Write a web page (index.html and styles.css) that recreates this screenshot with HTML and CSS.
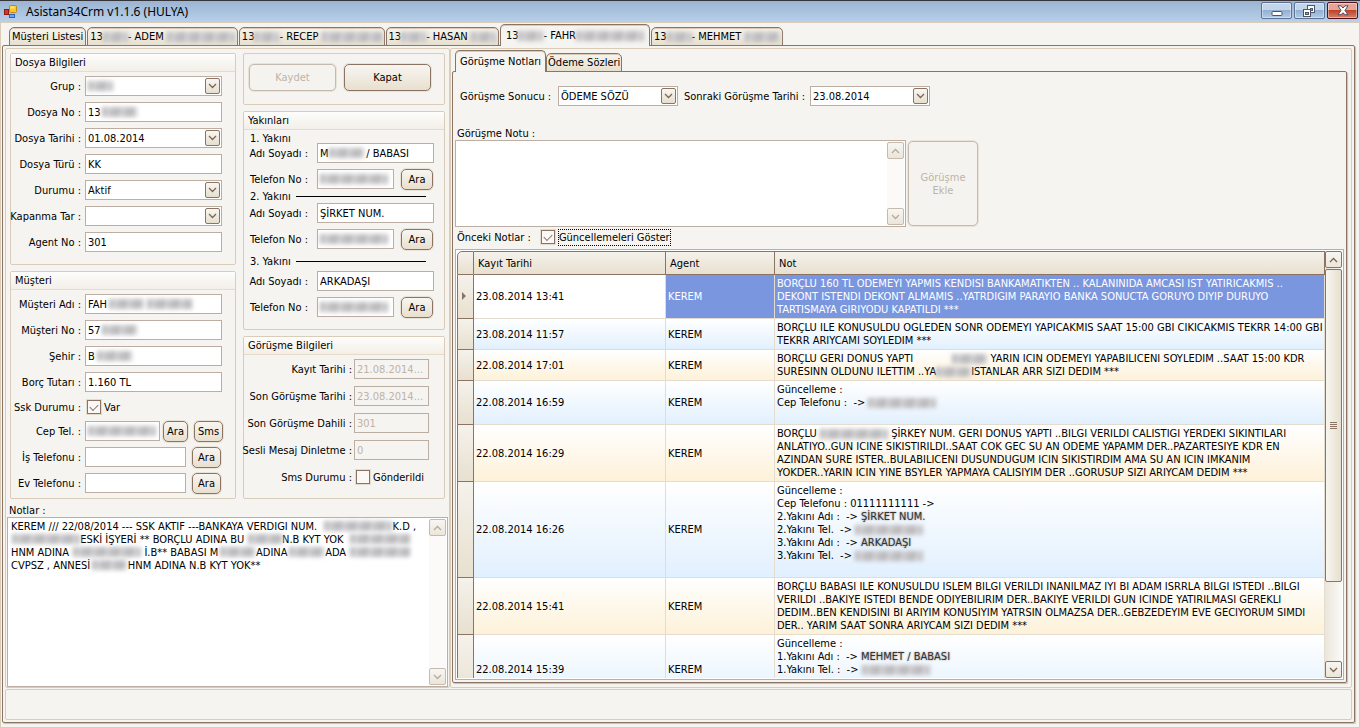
FILE: index.html
```html
<!DOCTYPE html>
<html lang="tr">
<head>
  <meta charset="UTF-8">
  <meta name="viewport" content="width=device-width, initial-scale=1.0">
  <title>Asistan34Crm v1.1.6 (HULYA)</title>
  <link rel="stylesheet" href="styles.css">
</head>
<body>
  <svg class="symbols" aria-hidden="true">
    <symbol id="down" viewBox="0 0 9 6"><path d="M1 1l3.500 3.500L8 1" fill="none" stroke="currentColor" stroke-width="1.300"/></symbol>
    <symbol id="up" viewBox="0 0 9 6"><path d="M1 5l3.500-3.500L8 5" fill="none" stroke="currentColor" stroke-width="1.300"/></symbol>
  </svg>

  <header class="titlebar">
    <svg class="app-icon" width="13" height="14" viewBox="0 0 13 14">
      <rect x="5.500" y="0.500" width="7" height="7" rx="1" fill="#fbc52d" stroke="#b78a1a"/>
      <rect x="6.500" y="1.500" width="4" height="2" fill="#fde68a"/>
      <rect x="0.500" y="4.500" width="4" height="5" fill="#d5381f" stroke="#8d1c10"/>
      <rect x="5.500" y="9.500" width="5" height="3" fill="#6ea6f5" stroke="#2f62b8"/>
    </svg>
    <h1>Asistan34Crm v1.1.6 (HULYA)</h1>
    <div class="window-buttons">
      <button type="button" aria-label="Simge durumuna küçült">
        <svg width="12" height="12" viewBox="0 0 12 12"><rect x="1" y="6.500" width="10" height="4" rx="1" fill="#fff" stroke="#4d5566"/></svg>
      </button>
      <button type="button" aria-label="Önceki boyut">
        <svg width="13" height="12" viewBox="0 0 13 12">
          <rect x="4.500" y="0.500" width="7" height="7" fill="#fff" stroke="#4d5566"/>
          <rect x="7.500" y="3.500" width="2" height="2" fill="#8ea9cb" stroke="#4d5566"/>
          <rect x="0.500" y="4.500" width="7" height="7" fill="#fff" stroke="#4d5566"/>
          <rect x="2.500" y="7.500" width="3" height="2" fill="#8ea9cb" stroke="#4d5566"/>
        </svg>
      </button>
      <button type="button" class="close" aria-label="Kapat">
        <svg width="12" height="11" viewBox="0 0 12 11"><path d="M1 .800h3l2 2.200L8 .800h3L8 5.500l3 4.200H8L6 7.800 4 9.700H1l3-4.200z" fill="#fff" stroke="#4d4a5c"/></svg>
      </button>
    </div>
  </header>

  <main class="window">
    <nav class="tabs">
      <button type="button">Müşteri Listesi</button>
      <button type="button">13<i class="smudge w25"></i>- ADEM <i class="smudge w70"></i></button>
      <button type="button">13<i class="smudge w25"></i>- RECEP <i class="smudge w60"></i></button>
      <button type="button">13<i class="smudge w25"></i>- HASAN <i class="smudge w25"></i></button>
      <button type="button" class="active">13<i class="smudge w25"></i>- FAHR<i class="smudge w70"></i></button>
      <button type="button">13<i class="smudge w25"></i>- MEHMET <i class="smudge w35"></i></button>
    </nav>

    <div class="page">
      <div class="columns">
        <section class="panel customer">
          <div class="groups">
            <div class="column">
              <fieldset class="group file-info">
                <h2>Dosya Bilgileri</h2>
                <div class="row">
                  <label for="grup">Grup :</label>
                  <div class="box"><select id="grup"><option></option></select><i class="smudge at-start w25"></i><span class="arrow"><svg><use href="#down"/></svg></span></div>
                </div>
                <div class="row">
                  <label for="dosyaNo">Dosya No :</label>
                  <div class="box"><input id="dosyaNo" value="13"><i class="smudge w35"></i></div>
                </div>
                <div class="row">
                  <label for="dosyaTarihi">Dosya Tarihi :</label>
                  <div class="box"><select id="dosyaTarihi"><option>01.08.2014</option></select><span class="arrow"><svg><use href="#down"/></svg></span></div>
                </div>
                <div class="row">
                  <label for="dosyaTuru">Dosya Türü :</label>
                  <div class="box"><input id="dosyaTuru" value="KK"></div>
                </div>
                <div class="row">
                  <label for="durumu">Durumu :</label>
                  <div class="box"><select id="durumu"><option>Aktif</option></select><span class="arrow"><svg><use href="#down"/></svg></span></div>
                </div>
                <div class="row">
                  <label for="kapanma">Kapanma Tar :</label>
                  <div class="box"><select id="kapanma"><option></option></select><span class="arrow"><svg><use href="#down"/></svg></span></div>
                </div>
                <div class="row">
                  <label for="agentNo">Agent No :</label>
                  <div class="box"><input id="agentNo" value="301"></div>
                </div>
              </fieldset>

              <fieldset class="group customer-info">
                <h2>Müşteri</h2>
                <div class="row">
                  <label for="musteriAdi">Müşteri Adı :</label>
                  <div class="box"><input id="musteriAdi" value="FAH"><i class="smudge after-word w35"></i><i class="smudge after-name w45"></i></div>
                </div>
                <div class="row">
                  <label for="musteriNo">Müşteri No :</label>
                  <div class="box"><input id="musteriNo" value="57"><i class="smudge w35"></i></div>
                </div>
                <div class="row">
                  <label for="sehir">Şehir :</label>
                  <div class="box"><input id="sehir" value="B"><i class="smudge after-letter w35"></i></div>
                </div>
                <div class="row">
                  <label for="borc">Borç Tutarı :</label>
                  <div class="box"><input id="borc" value="1.160 TL"></div>
                </div>
                <div class="row short">
                  <span class="caption">Ssk Durumu :</span>
                  <label class="check"><input type="checkbox" checked> Var</label>
                </div>
                <div class="row">
                  <label for="cepTel">Cep Tel. :</label>
                  <div class="box cell-phone"><input id="cepTel"><i class="smudge at-start w70"></i></div>
                  <button type="button" class="small narrow">Ara</button>
                  <button type="button" class="small">Sms</button>
                </div>
                <div class="row">
                  <label for="isTel">İş Telefonu :</label>
                  <div class="box phone"><input id="isTel"></div>
                  <button type="button" class="small">Ara</button>
                </div>
                <div class="row">
                  <label for="evTel">Ev Telefonu :</label>
                  <div class="box phone"><input id="evTel"></div>
                  <button type="button" class="small">Ara</button>
                </div>
              </fieldset>
            </div>

            <div class="column">
              <div class="group actions">
                <button type="button" disabled>Kaydet</button>
                <button type="button">Kapat</button>
              </div>

              <fieldset class="group relatives">
                <h2>Yakınları</h2>
                <h3>1. Yakını</h3>
                <div class="row">
                  <label for="yakin1">Adı Soyadı :</label>
                  <div class="box"><input id="yakin1" value="M            / BABASI"><i class="smudge after-letter w35"></i></div>
                </div>
                <div class="row">
                  <label for="yakinTel1">Telefon No :</label>
                  <div class="box"><input id="yakinTel1"><i class="smudge at-start w70"></i></div>
                  <button type="button" class="small">Ara</button>
                </div>
                <h3 class="ruled">2. Yakını</h3>
                <div class="row">
                  <label for="yakin2">Adı Soyadı :</label>
                  <div class="box"><input id="yakin2" value="ŞİRKET NUM."></div>
                </div>
                <div class="row">
                  <label for="yakinTel2">Telefon No :</label>
                  <div class="box"><input id="yakinTel2"><i class="smudge at-start w70"></i></div>
                  <button type="button" class="small">Ara</button>
                </div>
                <h3 class="ruled spaced">3. Yakını</h3>
                <div class="row">
                  <label for="yakin3">Adı Soyadı :</label>
                  <div class="box"><input id="yakin3" value="ARKADAŞI"></div>
                </div>
                <div class="row">
                  <label for="yakinTel3">Telefon No :</label>
                  <div class="box"><input id="yakinTel3"><i class="smudge at-start w70"></i></div>
                  <button type="button" class="small">Ara</button>
                </div>
              </fieldset>

              <fieldset class="group call-info">
                <h2>Görüşme Bilgileri</h2>
                <div class="row">
                  <label for="kayitTarihi">Kayıt Tarihi :</label>
                  <div class="box"><input id="kayitTarihi" value="21.08.2014..." disabled></div>
                </div>
                <div class="row">
                  <label for="sonTarih">Son Görüşme Tarihi :</label>
                  <div class="box"><input id="sonTarih" value="23.08.2014..." disabled></div>
                </div>
                <div class="row">
                  <label for="sonDahili">Son Görüşme Dahili :</label>
                  <div class="box"><input id="sonDahili" value="301" disabled></div>
                </div>
                <div class="row">
                  <label for="sesli">Sesli Mesaj Dinletme :</label>
                  <div class="box"><input id="sesli" value="0" disabled></div>
                </div>
                <div class="row">
                  <span class="caption">Sms Durumu :</span>
                  <label class="check"><input type="checkbox"> Gönderildi</label>
                </div>
              </fieldset>
            </div>
          </div>

          <label class="notes-label" for="notlar">Notlar :</label>
          <div class="memo notes">
            <textarea id="notlar">KEREM /// 22/08/2014 --- SSK AKTIF ---BANKAYA VERDIGI NUM.                        K.D ,
                      ESKİ İŞYERİ ** BORÇLU ADINA BU            N.B KYT YOK
HNM ADINA                        İ.B** BABASI M            ADINA            ADA
CVPSZ , ANNESİ            HNM ADINA N.B KYT YOK**</textarea>
            <i class="smudge w70 note-a"></i>
            <i class="smudge w70 note-b"></i>
            <i class="smudge w35 note-c"></i>
            <i class="smudge w60 note-d"></i>
            <i class="smudge w70 note-e"></i>
            <i class="smudge w35 note-f"></i>
            <i class="smudge w35 note-g"></i>
            <i class="smudge w60 note-h"></i>
            <i class="smudge w35 note-i"></i>
            <div class="scrollbar off">
              <span class="scroll-button"><svg><use href="#up"/></svg></span>
              <span class="scroll-button"><svg><use href="#down"/></svg></span>
            </div>
          </div>
        </section>

        <section class="panel calls">
          <nav class="tabs">
            <button type="button" class="active">Görüşme Notları</button>
            <button type="button">Ödeme Sözleri</button>
          </nav>
          <div class="page call-page">
            <div class="filters">
              <label for="sonuc">Görüşme Sonucu :</label>
              <div class="box"><select id="sonuc"><option>ÖDEME SÖZÜ</option></select><span class="arrow"><svg><use href="#down"/></svg></span></div>
              <label for="sonraki">Sonraki Görüşme Tarihi :</label>
              <div class="box"><select id="sonraki"><option>23.08.2014</option></select><span class="arrow"><svg><use href="#down"/></svg></span></div>
            </div>

            <label class="new-note-label" for="yeniNot">Görüşme Notu :</label>
            <div class="new-note">
              <div class="memo">
                <textarea id="yeniNot"></textarea>
                <div class="scrollbar off">
                  <span class="scroll-button"><svg><use href="#up"/></svg></span>
                  <span class="scroll-button"><svg><use href="#down"/></svg></span>
                </div>
              </div>
              <button type="button" disabled>Görüşme<br>Ekle</button>
            </div>

            <div class="history-bar">
              <span>Önceki Notlar :</span>
              <label class="check"><input type="checkbox" checked><span class="focused">Güncellemeleri Göster</span></label>
            </div>

            <div class="grid">
              <div class="grid-view">
                <table>
                  <colgroup><col class="col-marker"><col class="col-date"><col class="col-agent"><col></colgroup>
                  <thead>
                    <tr><th></th><th>Kayıt Tarihi</th><th>Agent</th><th>Not</th></tr>
                  </thead>
                  <tbody>
                    <tr class="selected">
                      <th><svg width="4" height="8" viewBox="0 0 4 8"><path d="M0 0l4 4-4 4z" fill="#8c7465"/></svg></th>
                      <td>23.08.2014 13:41</td>
                      <td>KEREM</td>
                      <td>BORÇLU 160 TL ODEMEYI YAPMIS KENDISI BANKAMATIKTEN .. KALANINIDA AMCASI IST YATIRICAKMIS ..<br>DEKONT ISTENDI DEKONT ALMAMIS ..YATRDIGIM PARAYIO BANKA SONUCTA GORUYO DIYIP DURUYO<br>TARTISMAYA GIRIYODU KAPATILDI ***</td>
                    </tr>
                    <tr class="blue">
                      <th></th>
                      <td>23.08.2014 11:57</td>
                      <td>KEREM</td>
                      <td>BORÇLU ILE KONUSULDU OGLEDEN SONR ODEMEYI YAPICAKMIS SAAT 15:00 GBI CIKICAKMIS TEKRR 14:00 GBI<br>TEKRR ARIYCAMI SOYLEDIM ***</td>
                    </tr>
                    <tr class="cream">
                      <th></th>
                      <td>22.08.2014 17:01</td>
                      <td>KEREM</td>
                      <td>BORÇLU GERI DONUS YAPTI <i class="blank"></i><i class="smudge w35"></i> YARIN ICIN ODEMEYI YAPABILICENI SOYLEDIM ..SAAT 15:00 KDR<br>SURESINN OLDUNU ILETTIM ..YA<i class="smudge w35"></i>ISTANLAR ARR SIZI DEDIM ***</td>
                    </tr>
                    <tr class="blue">
                      <th></th>
                      <td>22.08.2014 16:59</td>
                      <td>KEREM</td>
                      <td>Güncelleme :<br>Cep Telefonu :&nbsp; -&gt; <i class="smudge w70"></i><br>&nbsp;</td>
                    </tr>
                    <tr class="cream">
                      <th></th>
                      <td>22.08.2014 16:29</td>
                      <td>KEREM</td>
                      <td>BORÇLU <i class="smudge w70"></i> ŞİRKEY NUM. GERI DONUS YAPTI ..BILGI VERILDI CALISTIGI YERDEKI SIKINTILARI<br>ANLATIYO..GUN ICINE SIKISTIRILDI..SAAT COK GEC SU AN ODEME YAPAMM DER..PAZARTESIYE KDR EN<br>AZINDAN SURE ISTER..BULABILICENI DUSUNDUGUM ICIN SIKISTIRDIM AMA SU AN ICIN IMKANIM<br>YOKDER..YARIN ICIN YINE BSYLER YAPMAYA CALISIYIM DER ..GORUSUP SIZI ARIYCAM DEDIM ***</td>
                    </tr>
                    <tr class="blue">
                      <th></th>
                      <td>22.08.2014 16:26</td>
                      <td>KEREM</td>
                      <td>Güncelleme :<br>Cep Telefonu : 01111111111 -&gt;<br>2.Yakını Adı :&nbsp; -&gt; <span class="soft">ŞİRKET NUM.</span><br>2.Yakını Tel.&nbsp; -&gt; <i class="smudge w70"></i><br>3.Yakını Adı :&nbsp; -&gt; <span class="soft">ARKADAŞI</span><br>3.Yakını Tel.&nbsp; -&gt; <i class="smudge w70"></i><br>&nbsp;</td>
                    </tr>
                    <tr class="cream">
                      <th></th>
                      <td>22.08.2014 15:41</td>
                      <td>KEREM</td>
                      <td>BORÇLU BABASI ILE KONUSULDU ISLEM BILGI VERILDI INANILMAZ IYI BI ADAM ISRRLA BILGI ISTEDI ..BILGI<br>VERILDI ..BAKIYE ISTEDI BENDE ODIYEBILIRIM DER..BAKIYE VERILDI GUN ICINDE YATIRILMASI GEREKLI<br>DEDIM..BEN KENDISINI BI ARIYIM KONUSIYIM YATRSIN OLMAZSA DER..GEBZEDEYIM EVE GECIYORUM SIMDI<br>DER.. YARIM SAAT SONRA ARIYCAM SIZI DEDIM ***</td>
                    </tr>
                    <tr class="blue">
                      <th></th>
                      <td>22.08.2014 15:39</td>
                      <td>KEREM</td>
                      <td>Güncelleme :<br>1.Yakını Adı :&nbsp; -&gt; <span class="soft">MEHMET / BABASI</span><br>1.Yakını Tel. :&nbsp; -&gt; <i class="smudge w70"></i><br>&nbsp;<br>&nbsp;</td>
                    </tr>
                  </tbody>
                </table>
              </div>
              <div class="scrollbar">
                <span class="scroll-button"><svg><use href="#up"/></svg></span>
                <span class="thumb"></span>
                <span class="track"></span>
                <span class="scroll-button"><svg><use href="#down"/></svg></span>
              </div>
            </div>
          </div>
        </section>
      </div>
      <footer class="panel status"></footer>
    </div>
  </main>
</body>
</html>
```
FILE: styles.css
```css
* {
  box-sizing: border-box;
}
body {
  margin: 0;
  height: 100vh;
  display: flex;
  flex-direction: column;
  background-color: #f6f4f0;
  font-family: 'DejaVu Sans Condensed', 'Noto Sans', sans-serif;
  font-size: 11px;
  line-height: 13px;
  color: #000;
  overflow: hidden;
}
button, input, select, textarea {
  font: inherit;
  color: inherit;
  margin: 0;
}
h1, h2, h3 {
  margin: 0;
  font-size: 11px;
  font-weight: normal;
}
.symbols {
  position: absolute;
  width: 0;
  height: 0;
}

/* title bar */
.titlebar {
  display: flex;
  align-items: center;
  height: 22px;
  flex: none;
  padding: 0 2px 0 4px;
  border-top: 1px solid #35343a;
  background: linear-gradient(#9ab4d3, #b8d0ea);
}
.titlebar h1 {
  flex: 1;
  padding-left: 9px;
  font-family: 'Noto Sans', sans-serif;
  font-size: 12px;
}
.window-buttons {
  display: flex;
  align-self: flex-start;
  gap: 2px;
  padding-top: 1px;
}
.window-buttons button {
  display: flex;
  align-items: center;
  justify-content: center;
  width: 31px;
  height: 17px;
  padding: 0;
  border: 1px solid #5d7191;
  border-radius: 2px;
  background: linear-gradient(#c3d5ea 45%, #93b0d2 50%, #b2cbe6);
  box-shadow: inset 0 0 0 1px rgba(255, 255, 255, 0.4);
}
.window-buttons .close {
  border-color: #4d1420;
  background: linear-gradient(#e4a598 45%, #bf4328 50%, #d8806a);
}

/* frame, tabs and panels */
.window {
  flex: 1;
  min-height: 0;
  display: flex;
  flex-direction: column;
  padding: 1px 4px 4px 1px;
  border: 1px solid #d9ccb9;
}
.tabs {
  display: flex;
  align-items: flex-end;
  gap: 1px;
  height: 22px;
  flex: none;
  margin-bottom: -1px;
  padding-left: 7px;
  position: relative;
  z-index: 1;
}
.tabs button {
  height: 19px;
  padding: 0 2px;
  border: 1px solid #8c7465;
  border-radius: 5px 5px 0 0;
  background: linear-gradient(#f6f4ef, #e8e0cf);
  box-shadow: inset 0 1px 0 #d9ccb9;
  white-space: nowrap;
}
.tabs .active {
  height: 22px;
  padding: 0 5px;
  border-bottom: none;
  background: #f6f4f0;
}
.page {
  flex: 1;
  min-height: 0;
  display: flex;
  flex-direction: column;
  padding: 2px;
  border: 1px solid #8c7465;
  border-radius: 2px;
  box-shadow: 1px 1px 1px #c9bfae;
}
.columns {
  flex: 1;
  min-height: 0;
  display: flex;
}
.panel {
  border: 1px solid #d9ccb9;
  border-radius: 2px;
}
.status {
  height: 31px;
  flex: none;
  margin-top: 1px;
}
.customer {
  width: 445px;
  flex: none;
  display: flex;
  flex-direction: column;
  padding: 4px 1px 0;
}
.calls {
  flex: 1;
  min-width: 0;
  display: flex;
  flex-direction: column;
  padding: 1px 4px 4px 1px;
}
.calls .tabs {
  gap: 0;
  padding-left: 3px;
}
.calls .tabs button {
  padding: 0 1px;
}
.calls .tabs .active {
  padding: 0 4px;
}

/* group boxes */
.groups {
  display: grid;
  grid-template-columns: 226px 202px;
  gap: 7px;
  padding: 0 3px;
}
.column {
  display: flex;
  flex-direction: column;
  gap: 6px;
}
.group {
  display: flex;
  flex-direction: column;
  min-width: 0;
  margin: 0;
  padding: 0;
  border: 1px solid #d9ccb9;
  border-radius: 2px;
}
.group h2 {
  height: 18px;
  margin-bottom: 4px;
  padding: 2px 4px;
  border-bottom: 1px solid #e8dcc8;
  background: linear-gradient(#fdfdfc, #f3efe8);
}
.row {
  display: flex;
  align-items: center;
  gap: 4px;
  height: 20px;
  margin-bottom: 6px;
  white-space: nowrap;
}
.short {
  height: 18px;
  margin-bottom: 5px;
}
.row > label:first-child, .caption {
  display: flex;
  justify-content: flex-end;
  width: 70px;
  flex: none;
}
.box {
  position: relative;
  width: 137px;
  height: 20px;
  flex: none;
}
.box input, .box select {
  width: 100%;
  height: 20px;
  padding: 0 2px;
  border: 1px solid #bcaea3;
  border-radius: 0;
  background: #fff;
  appearance: none;
  outline: none;
}
.box input:disabled {
  background: #f6f4f0;
  color: #bdb3a8;
}
.arrow {
  position: absolute;
  top: 2px;
  right: 2px;
  display: flex;
  align-items: center;
  justify-content: center;
  width: 15px;
  height: 16px;
  border: 1px solid #8c7465;
  border-radius: 2px;
  background: linear-gradient(#f8f6f2, #e6dfce);
  color: #7d6555;
  pointer-events: none;
}
.arrow svg, .scroll-button svg {
  width: 9px;
  height: 6px;
}
.cell-phone {
  width: 75px;
}
.phone {
  width: 101px;
}
.check {
  display: flex;
  align-items: center;
  gap: 3px;
}
.check input {
  appearance: none;
  display: grid;
  place-items: center;
  width: 14px;
  height: 14px;
  margin-left: 2px;
  border: 1px solid #8c7465;
  background: #faf9f7;
  outline: 1px solid #e4dccd;
}
.check input:checked::before {
  content: '';
  width: 7px;
  height: 4px;
  margin-top: -2px;
  border: solid #8c7465;
  border-width: 0 0 1px 1px;
  transform: rotate(-45deg);
}
.small, .actions button, .new-note button {
  padding: 0;
  border: 1px solid #8c7465;
  border-radius: 5px;
  background: linear-gradient(#f8f6f2, #e8e0cf);
  box-shadow: 0 0 0 1px #e9e2d6;
}
.small {
  width: 29px;
  height: 21px;
  margin-left: 2px;
}
.narrow {
  width: 25px;
  margin-left: -1px;
}
button:disabled {
  border-color: #c4bab0 !important;
  background: #f5f3ef !important;
  color: #bdb3a8;
}

.file-info {
  height: 212px;
}
.customer-info {
  height: 228px;
}
.actions {
  flex-direction: row;
  justify-content: center;
  gap: 8px;
  height: 52px;
  padding: 10px 8px 0 0;
}
.actions button {
  width: 87px;
  height: 27px;
}

.relatives {
  height: 219px;
}
.relatives h3 {
  display: flex;
  align-items: center;
  gap: 5px;
  height: 14px;
  padding-left: 6px;
}
.relatives h2 + h3 {
  margin-bottom: -4px;
  height: 17px;
}
.relatives h2 {
  margin-bottom: 0;
}
.relatives .ruled {
  margin-top: -6px;
}
.relatives .ruled::after {
  content: '';
  width: 130px;
  height: 1px;
  background: #000;
}
.relatives .spaced {
  height: 20px;
  margin-top: -4px;
}
.relatives .row > label:first-child {
  width: 64px;
}
.relatives .row {
  gap: 9px;
}
.relatives .box {
  width: 117px;
}
.relatives .box:not(:last-child) {
  width: 77px;
}
.relatives .small {
  width: 32px;
  margin-left: -2px;
}

.call-info {
  height: 163px;
}
.call-info .row {
  gap: 2px;
  margin-bottom: 7px;
}
.call-info .row > label:first-child, .call-info .caption {
  width: 108px;
}
.call-info .box {
  width: 75px;
}

/* memo boxes */
.notes-label {
  padding: 5px 2px 0;
}
.memo {
  position: relative;
  display: flex;
  border: 1px solid #bcaea3;
  background: #fff;
}
.memo textarea {
  flex: 1;
  padding: 2px 3px;
  border: none;
  outline: none;
  resize: none;
  background: none;
  overflow: hidden;
  white-space: pre;
}
.notes {
  flex: 1;
  min-height: 0;
}
.scrollbar {
  display: flex;
  flex-direction: column;
  justify-content: space-between;
  width: 17px;
  flex: none;
  margin: 1px;
  background: linear-gradient(90deg, #ebe6da, #fbfaf8);
  color: #7d6555;
}
.scrollbar.off {
  background: #fbfaf8;
  color: #b5aaa0;
}
.scroll-button {
  display: flex;
  align-items: center;
  justify-content: center;
  height: 17px;
  border: 1px solid #8c7465;
  border-radius: 2px;
  background: linear-gradient(#f8f6f2, #ece6d9);
}
.off .scroll-button {
  border-color: #c4bab0;
}
.thumb {
  flex: 313;
  display: grid;
  place-items: center;
  margin-top: 1px;
  border: 1px solid #8c7465;
  border-radius: 2px;
  background: linear-gradient(90deg, #f8f6f2, #e6dfce);
}
.thumb::after {
  content: '';
  width: 7px;
  height: 7px;
  background: repeating-linear-gradient(#8c7465 0 1px, transparent 1px 2px);
}
.track {
  flex: 80;
}

/* calls page */
.call-page {
  padding: 14px 2px 2px;
}
.filters {
  display: flex;
  align-items: center;
  gap: 6px;
  padding-left: 5px;
}
.filters label {
  white-space: nowrap;
}
.filters label:first-child {
  width: 92px;
}
.filters label:nth-of-type(2) {
  width: 120px;
}
.filters .box {
  width: 120px;
}
.new-note-label {
  margin-top: 21px;
  padding-left: 2px;
}
.new-note {
  display: flex;
  gap: 2px;
  height: 87px;
  flex: none;
}
.new-note .memo {
  width: 451px;
}
.new-note button {
  width: 70px;
  margin: 1px 0;
}
.history-bar {
  display: flex;
  align-items: center;
  gap: 8px;
  height: 22px;
  flex: none;
  padding: 0 0 2px 2px;
}
.focused {
  padding: 1px 0;
  border: 1px dotted #000;
}
.grid {
  flex: 1;
  min-height: 0;
  display: flex;
  padding: 1px;
  border: 1px solid #bcaea3;
  background: #fff;
}
.grid .scrollbar {
  margin: 0;
}
.grid-view {
  flex: 1;
  min-width: 0;
  overflow: hidden;
}
table {
  width: 100%;
  table-layout: fixed;
  border-collapse: separate;
  border-spacing: 0;
}
.col-marker {
  width: 17px;
}
.col-date {
  width: 192px;
}
.col-agent {
  width: 109px;
}
th {
  padding: 0 4px;
  border: solid #8c7465;
  border-width: 0 1px 1px 0;
  background: linear-gradient(#f5f2ec, #e8e0cf);
  font-weight: normal;
  text-align: left;
}
thead th {
  height: 24px;
  border-top-width: 1px;
}
th:first-child {
  border-left-width: 1px;
}
thead th:first-child {
  border-top-left-radius: 5px;
}
td {
  padding: 2px;
  border: solid #e4ddcf;
  border-width: 0 1px 1px 0;
  white-space: nowrap;
  overflow: hidden;
}
.blue {
  background: linear-gradient(#fff, #e1f0fe);
}
.cream {
  background: linear-gradient(#fff, #fdf1d8);
}
.selected td {
  background: #7a96df;
  color: #fff;
}
.selected td:nth-child(2) {
  background: #fff;
  color: #000;
}

/* masked personal data */
.smudge {
  display: inline-block;
  height: 10px;
  vertical-align: middle;
  background: repeating-linear-gradient(100deg, #b9b8bb 0 4px, #cfced1 4px 9px, #c0bfc2 9px 14px);
  filter: blur(2px);
}
.box .smudge, .memo .smudge {
  position: absolute;
  top: 5px;
  left: 17px;
  pointer-events: none;
}
.box .at-start {
  left: 3px;
}
.box .after-letter {
  left: 12px;
}
.box .after-word {
  left: 24px;
}
.box .after-name {
  left: 62px;
}
.w25 {
  width: 25px;
}
.w35 {
  width: 35px;
}
.w45 {
  width: 45px;
}
.w60 {
  width: 60px;
}
.w70 {
  width: 68px;
}
.blank {
  display: inline-block;
  width: 36px;
}
.soft {
  color: #333;
  text-shadow: 0 0 2px #777;
}
.memo .note-a {
  left: 316px;
  top: 3px;
}
.memo .note-b {
  left: 4px;
  top: 16px;
}
.memo .note-c {
  left: 240px;
  top: 16px;
}
.memo .note-d {
  left: 342px;
  top: 16px;
}
.memo .note-e {
  left: 65px;
  top: 29px;
}
.memo .note-f {
  left: 212px;
  top: 29px;
}
.memo .note-g {
  left: 281px;
  top: 29px;
}
.memo .note-h {
  left: 342px;
  top: 29px;
}
.memo .note-i {
  left: 84px;
  top: 42px;
}
```
